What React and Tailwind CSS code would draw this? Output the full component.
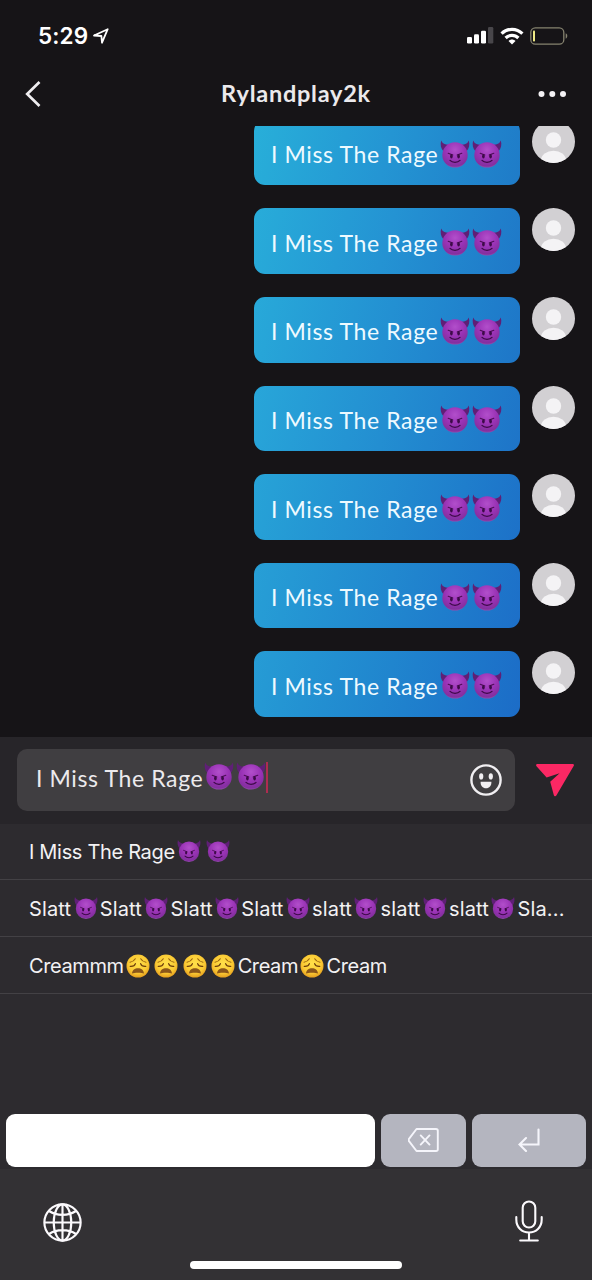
import React from "react";

function Devil({ className }) {
  return (
    <svg viewBox="0 0 30 28" className={className} role="img" aria-label="smiling face with horns">
      <defs>
        <radialGradient id="devilFace" cx="0.5" cy="0.3" r="0.75">
          <stop offset="0" stopColor="#b24fcb" />
          <stop offset="0.5" stopColor="#9a33b6" />
          <stop offset="0.85" stopColor="#842f9f" />
          <stop offset="1" stopColor="#a060b8" />
        </radialGradient>
      </defs>
      <path d="M1.2 0.4C0 4.5 0.8 8.6 3.8 11.4L9.6 4.6C5.8 4.9 2.4 3.8 1.2 0.4Z" fill="#5f1f76" />
      <path d="M28.8 0.4C30 4.5 29.2 8.6 26.2 11.4L20.4 4.6C24.2 4.9 27.6 3.8 28.8 0.4Z" fill="#5f1f76" />
      <circle cx="15" cy="14.9" r="12.7" fill="url(#devilFace)" />
      <path d="M8.2 13.2L12.8 15M21.8 13.2L17.2 15" stroke="#4c0d55" strokeWidth="1.1" strokeLinecap="round" />
      <ellipse cx="11.4" cy="16.3" rx="1.3" ry="2.2" fill="#3d0a48" />
      <ellipse cx="18.6" cy="16.3" rx="1.3" ry="2.2" fill="#3d0a48" />
      <path d="M10 20.4C12.4 23 17.6 23 20 20.4" fill="none" stroke="#3d0a48" strokeWidth="1.3" strokeLinecap="round" />
    </svg>
  );
}

function Weary({ className }) {
  return (
    <svg viewBox="0 0 24 24" className={className} role="img" aria-label="weary face">
      <defs>
        <radialGradient id="wearyFace" cx="0.5" cy="0.4" r="0.62">
          <stop offset="0" stopColor="#ffe04a" />
          <stop offset="0.65" stopColor="#fbca34" />
          <stop offset="1" stopColor="#e29a1c" />
        </radialGradient>
      </defs>
      <circle cx="12" cy="12" r="11.5" fill="url(#wearyFace)" />
      <path d="M4 8.2C6.5 7.8 8.3 6.7 9.3 4.8M20 8.2C17.5 7.8 15.7 6.7 14.7 4.8" fill="none" stroke="#9a6410" strokeWidth="1.1" strokeLinecap="round" />
      <path d="M4.2 12.4C6.8 12.6 8.8 11.6 9.4 9.6M19.8 12.4C17.2 12.6 15.2 11.6 14.6 9.6" fill="none" stroke="#6d3d0c" strokeWidth="1.2" strokeLinecap="round" />
      <path d="M6 19.6C6.2 16 9 14.2 12 14.2C15 14.2 17.8 16 18 19.6C16 18.4 8 18.4 6 19.6Z" fill="#8a561a" />
    </svg>
  );
}

function Avatar() {
  return (
    <svg viewBox="0 0 43 43" className="h-[43px] w-[43px] shrink-0">
      <defs>
        <clipPath id="avatarClip">
          <circle cx="21.5" cy="21.5" r="21.5" />
        </clipPath>
      </defs>
      <g clipPath="url(#avatarClip)">
        <rect width="43" height="43" fill="#d2d0d3" />
        <circle cx="21.5" cy="20" r="7.7" fill="#f4f3f5" />
        <ellipse cx="21.5" cy="40.5" rx="12.5" ry="9.8" fill="#f4f3f5" />
      </g>
    </svg>
  );
}

const bubbleColors = [
  "from-[#28afd9] via-[#2495d3] to-[#1f7bc8]",
  "from-[#28acd9] via-[#2493d3] to-[#1f78c8]",
  "from-[#28a9d9] via-[#2390d2] to-[#1e76c8]",
  "from-[#28a6d9] via-[#238ed1] to-[#1e74c8]",
  "from-[#27a3d7] via-[#228bd0] to-[#1d71c8]",
  "from-[#279fd6] via-[#2188cf] to-[#1d6fc8]",
  "from-[#269cd5] via-[#2085ce] to-[#1c6cc7]",
];

function Message({ colors }) {
  return (
    <div className="flex shrink-0 gap-3">
      <div className={`flex h-[65.6px] w-[266px] items-center rounded-[11px] bg-linear-105 pl-[17px] ${colors}`}>
        <span className="w-[169px] whitespace-nowrap pt-[3px] font-['Lato','Open_Sans',sans-serif] text-[23px] leading-7 tracking-[0.62px] text-[#eefaff]">
          I Miss The Rage
        </span>
        <Devil className="mt-0.5 h-7 w-[30px]" />
        <Devil className="ml-[1.5px] mt-0.5 h-7 w-[30px]" />
      </div>
      <Avatar />
    </div>
  );
}

function Suggestion({ parts, tracking }) {
  return (
    <div className={`flex h-[57px] items-center overflow-hidden whitespace-nowrap border-b border-[#434145] pl-[29px] pt-0.5 font-['Inter',sans-serif] text-[20px] text-[#f3f2f4] ${tracking}`}>
      {parts.map((p, i) => {
        if (p === "D")
          return (
            <span key={i} className="flex w-[28.5px] shrink-0 justify-center pb-0.5">
              <Devil className="h-6 w-6" />
            </span>
          );
        if (p === "W")
          return (
            <span key={i} className="flex w-[28.5px] shrink-0 justify-center">
              <Weary className="h-6 w-6" />
            </span>
          );
        return (
          <span key={i} className="shrink-0">
            {p}
          </span>
        );
      })}
    </div>
  );
}

export default function App() {
  return (
    <div className="flex h-[1280px] w-[592px] flex-col overflow-hidden bg-[#161417] text-white">
      <header className="flex h-[126px] shrink-0 flex-col">
        <div className="flex h-[70px] items-center justify-between pl-[38px] pr-6">
          <div className="flex items-center gap-[5px] pt-0.5">
            <span className="font-['Inter',sans-serif] text-[22.5px] font-semibold leading-7 tracking-[0.1px]">5:29</span>
            <svg viewBox="0 0 16 16" className="h-4 w-4" fill="none" stroke="white" strokeWidth="1.8" strokeLinejoin="round">
              <path d="M1 7.5L14.7 1.2L9 14.7L8.4 8Z" />
            </svg>
          </div>
          <div className="flex items-center pt-px">
            <svg viewBox="0 0 27 17" className="h-[17px] w-[27px]">
              <rect x="0" y="10" width="5" height="6.5" rx="1.3" fill="white" />
              <rect x="7" y="7.2" width="5" height="9.3" rx="1.3" fill="white" />
              <rect x="14" y="3.8" width="5" height="12.7" rx="1.3" fill="white" />
              <rect x="21" y="0" width="5.3" height="16.5" rx="1.3" fill="#48464a" />
            </svg>
            <svg viewBox="0 0 24 18" className="ml-1.5 h-[18px] w-6" fill="none" stroke="white" strokeWidth="3.2">
              <path d="M1.6 6.6C7.4 0.9 16.6 0.9 22.4 6.6" />
              <path d="M5.6 11C9.2 7.4 14.8 7.4 18.4 11" />
              <path d="M8.5 14C10.5 12 13.5 12 15.5 14L12 17.6Z" fill="white" stroke="none" />
            </svg>
            <svg viewBox="0 0 38 18" className="ml-[6.5px] h-[18px] w-[38px]">
              <rect x="0.8" y="0.8" width="33" height="16.4" rx="4.5" fill="none" stroke="#85826f" strokeWidth="1.3" />
              <rect x="3" y="3.5" width="2" height="11" rx="0.8" fill="#efea86" />
              <path d="M35.7 6.3C37.8 7.2 37.8 10.8 35.7 11.7Z" fill="#85826f" />
            </svg>
          </div>
        </div>
        <div className="flex h-12 items-center justify-between pl-[25px] pr-[25px]">
          <svg viewBox="0 0 16 26" className="h-[26px] w-[29px]" preserveAspectRatio="xMinYMid meet" fill="none" stroke="#efedf0" strokeWidth="2.7">
            <path d="M14.5 1L2.2 13L14.5 25" />
          </svg>
          <h1 className="pb-0.5 font-['Lato','Open_Sans',sans-serif] text-[23.5px] font-bold leading-7 tracking-[0.75px] text-[#ebe9ec]">Rylandplay2k</h1>
          <svg viewBox="0 0 29 8" className="h-2 w-[29px]" fill="#f3f1f4">
            <circle cx="3.5" cy="4" r="3" />
            <circle cx="14.3" cy="4" r="3" />
            <circle cx="25" cy="4" r="3" />
          </svg>
        </div>
      </header>

      <main className="flex h-[611px] shrink-0 flex-col items-end justify-end gap-[23px] overflow-hidden pb-5 pr-[17px]">
        {bubbleColors.map((colors, i) => (
          <Message key={i} colors={colors} />
        ))}
      </main>

      <div className="flex h-[87px] shrink-0 items-center bg-[#272529] pb-px pl-[17px]">
        <div className="flex h-[62px] w-[498px] items-center rounded-[10px] bg-[#403e41] pl-[19px] pr-3">
          <span className="w-[168px] whitespace-nowrap pb-1 font-['Lato','Open_Sans',sans-serif] text-[23px] leading-7 tracking-[0.62px] text-[#eceaed]">
            I Miss The Rage
          </span>
          <Devil className="mb-[9px] h-7 w-[30px]" />
          <Devil className="mb-[9px] ml-[1.5px] h-7 w-[30px]" />
          <span className="mb-[5px] h-[31px] w-[2.5px] bg-[#ae2c50]" />
          <svg viewBox="0 0 34 34" className="ml-auto h-[34px] w-[34px]">
            <circle cx="17" cy="17" r="14.6" fill="none" stroke="#f1eff2" strokeWidth="2.4" />
            <ellipse cx="12.2" cy="13.4" rx="2.1" ry="3.1" fill="#f1eff2" />
            <ellipse cx="21.8" cy="13.4" rx="2.1" ry="3.1" fill="#f1eff2" />
            <path d="M11.6 18.7H22.4C22.7 22.5 20.2 25.3 17 25.3C13.8 25.3 11.3 22.5 11.6 18.7Z" fill="#f1eff2" />
          </svg>
        </div>
        <svg viewBox="0 0 40 34" className="ml-5 h-[34px] w-10" fill="#fb2864">
          <path d="M2.2 1H37.8C38.8 1 39.3 1.9 38.8 2.8L21.5 32.3C20.8 33.6 19.1 33.3 18.8 31.9L15.2 18.8L24.6 10.2L11.6 14.6L1.5 3.3C0.7 2.4 1.1 1 2.2 1Z" />
        </svg>
      </div>

      <section className="flex h-[290px] shrink-0 flex-col bg-[#2d2b2f]">
        <div className="-mt-px">
          <Suggestion tracking="tracking-[-0.32px]" parts={["I Miss The Rage", "D", "D"]} />
          <Suggestion
            tracking="tracking-[0.15px]"
            parts={["Slatt", "D", "Slatt", "D", "Slatt", "D", "Slatt", "D", "slatt", "D", "slatt", "D", "slatt", "D", "Sla..."]}
          />
          <Suggestion tracking="tracking-[-0.4px]" parts={["Creammm", "W", "W", "W", "W", "Cream", "W", "Cream"]} />
        </div>
      </section>

      <div className="flex h-[55px] shrink-0 gap-1.5 bg-[#2d2b2f] px-1.5">
        <div className="h-[53px] w-[369px] rounded-[9px] bg-white" />
        <div className="flex h-[53px] w-[85px] items-center justify-center rounded-[9px] bg-[#b4b5bf]">
          <svg viewBox="0 0 31 24" className="mb-px h-6 w-[31px]" fill="none" stroke="#f5f5fb" strokeWidth="1.9" strokeLinejoin="round" strokeLinecap="round">
            <path d="M8.5 1H28Q29.8 1 29.8 2.8V21.2Q29.8 23 28 23H8.5L1 13.2Q0.2 12 1 10.8Z" />
            <path d="M12.7 7.4L21.5 16.6M21.5 7.4L12.7 16.6" />
          </svg>
        </div>
        <div className="flex h-[53px] w-[114px] items-center justify-center rounded-[9px] bg-[#b4b5bf]">
          <svg viewBox="0 0 22 24" className="mb-px h-6 w-[22px]" fill="none" stroke="#f5f5fb" strokeWidth="2.1" strokeLinecap="round">
            <path d="M20.5 1.5V16.5H1.5M8 10L1.5 16.5L8 23" />
          </svg>
        </div>
      </div>

      <footer className="flex grow flex-col bg-[#333134]">
        <div className="flex h-[105px] items-center justify-between pl-[43px] pr-[49px]">
          <svg viewBox="0 0 40 40" className="mt-px h-[39px] w-[39px]" fill="none" stroke="#fcfafd" strokeWidth="2.2">
            <circle cx="20" cy="20" r="18.6" />
            <ellipse cx="20" cy="20" rx="9" ry="18.6" />
            <path d="M20 1.6V38.4M1.6 20H38.4M6.2 8.2C14 13.5 26 13.5 33.8 8.2M6.2 31.8C14 26.5 26 26.5 33.8 31.8" />
          </svg>
          <svg viewBox="0 0 28 42" className="mb-0.5 h-[42px] w-7" fill="none" stroke="#fcfafd" strokeWidth="2.1" strokeLinecap="round">
            <rect x="7.7" y="1.5" width="12.6" height="26" rx="6.3" />
            <path d="M1.3 17V19.5C1.3 27.5 7 32.5 14 32.5S26.7 27.5 26.7 19.5V17M14 32.5V40M5.2 40.5H22.8" />
          </svg>
        </div>
        <div className="-mt-[13px] h-2 w-[212px] self-center rounded-full bg-white" />
      </footer>
    </div>
  );
}
